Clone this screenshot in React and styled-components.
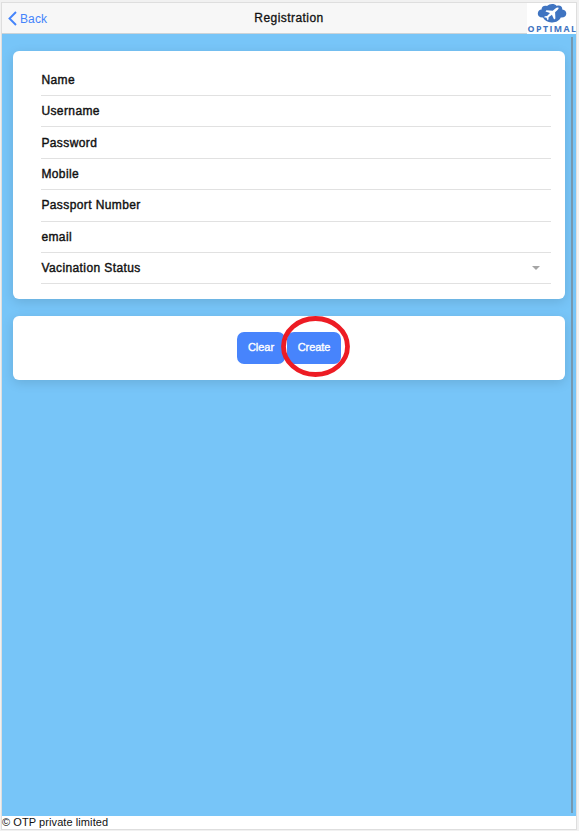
import React from 'react';
import styled, { createGlobalStyle } from 'styled-components';

const GlobalStyle = createGlobalStyle`
  * { box-sizing: border-box; }
  body {
    margin: 0;
    background: #f1f1f1;
    font-family: "Liberation Sans", Arial, sans-serif;
    color: #111;
  }
`;

const Page = styled.div`
  width: 579px;
  height: 831px;
  padding: 2px 2px 1px 1px;
  overflow: hidden;
`;

const Frame = styled.main`
  position: relative;
  height: 828px;
  width: 576px;
  border: 1px solid #dedede;
  background: #fff;
  display: flex;
  flex-direction: column;
`;

const Header = styled.header`
  display: grid;
  grid-template-columns: 1fr auto 1fr;
  align-items: center;
  height: 31px;
  flex: none;
  background: #f7f7f7;
  border-bottom: 1px solid #cbd3d8;
`;

const BackButton = styled.button`
  display: flex;
  align-items: center;
  gap: 3px;
  border: 0;
  padding: 0 0 0 6px;
  background: none;
  color: #4484fb;
  font: 12px "Liberation Sans", Arial, sans-serif;
  letter-spacing: 0.1px;
`;

const Title = styled.h1`
  margin: 0 0 2px 0;
  font-size: 12px;
  font-weight: 400;
  letter-spacing: 0.44px;
  -webkit-text-stroke: 0.3px #111;
`;

const Brand = styled.div`
  justify-self: end;
  align-self: start;
  display: flex;
  flex-direction: column;
  align-items: center;
  width: 49px;
  height: 31px;
  background: #fff;
  color: #3f74c1;
`;

const BrandName = styled.span`
  font: 700 8.8px/8px "Open Sans", sans-serif;
  letter-spacing: 1.45px;
  margin: 2px -2px 0 0;
`;

const Content = styled.section`
  position: relative;
  flex: 1;
  display: flex;
  flex-direction: column;
  gap: 17px;
  padding: 17px 11px 0;
  background: #77c5f8;
`;

const Card = styled.div`
  width: 552px;
  flex: none;
  border-radius: 6px;
  background: #fff;
  box-shadow: 0 3px 12px rgba(0, 0, 0, 0.12);
`;

const FormCard = styled(Card)`
  height: 248px;
  padding: 13.6px 14px 0 28px;
`;

const ActionCard = styled(Card)`
  height: 64px;
  padding-top: 16px;
  display: flex;
  justify-content: center;
  gap: 2px;
`;

const Field = styled.label`
  display: flex;
  align-items: center;
  justify-content: space-between;
  height: 31.4px;
  padding: 0 11px 0 0.4px;
  border-bottom: 1px solid #e1e1e1;
  font-size: 12px;
  letter-spacing: 0.4px;
  -webkit-text-stroke: 0.4px #111;
`;

const Caret = styled.i`
  border: 4px solid transparent;
  border-top-color: #a5a5a5;
  border-bottom: 0;
`;

const ActionButton = styled.button`
  width: ${({ $width }) => $width}px;
  height: 32px;
  padding: 0 0 2px;
  border: 0;
  border-radius: 7px;
  background: #4784fc;
  color: #fff;
  font: 11px "Liberation Sans", Arial, sans-serif;
  letter-spacing: -0.05px;
  -webkit-text-stroke: 0.35px #fff;
`;

const Highlight = styled.svg`
  position: absolute;
  left: 279px;
  top: 281px;
`;

const ScrollThumb = styled.div`
  position: absolute;
  top: 3px;
  right: 3px;
  width: 2px;
  height: 776px;
  background: #7699b0;
`;

const Footer = styled.footer`
  height: 13px;
  flex: none;
  font-size: 11px;
  line-height: 13px;
  letter-spacing: 0.08px;
  white-space: nowrap;
`;

const fields = ['Name', 'Username', 'Password', 'Mobile', 'Passport Number', 'email', 'Vacination Status'];

function CloudPlane() {
  return (
    <svg width="30" height="20" viewBox="0 0 30 20">
      <path
        fill="currentColor"
        d="M6 14.6C2.4 14.8.6 12.8.8 10.3 1 8 2.600 6.600 4.600 6.500 4.300 3.500 7.300 1.900 10 3 12.500.4 17.500.2 19.800 2.900 22.800 1.800 25.500 3.600 25.300 6.500 27.800 6.700 29.300 8.400 29.300 10.400 29.300 13.200 27 14.900 23.800 14.500 22.500 17.600 18.800 19.600 15 19.400 11 19.600 7.500 17.800 6 14.600z"
      />
      <path
        fill="#fff"
        d="M21.300 4.600c.7.700.1 1.700-.8 2.500l-2.400 2.100.3 6.200-1.300 1-2.200-4.700-3.300 2.600-.1 2.200-1 .7-1-2.400-2.500-.6.800-1 2.200-.1 3-3-4.500-1.700.9-1.200 6.300.5 2.700-2.300c.9-.8 2.300-1.300 2.900-.8z"
      />
    </svg>
  );
}

export default function App() {
  return (
    <Page>
      <GlobalStyle />
      <Frame>
        <Header>
          <BackButton>
            <svg width="9" height="15" viewBox="0 0 9 15" fill="none">
              <path d="M8 1 1.5 7.5 8 14" stroke="currentColor" strokeWidth="1.9" />
            </svg>
            Back
          </BackButton>
          <Title>Registration</Title>
          <Brand>
            <CloudPlane />
            <BrandName>OPTIMAL</BrandName>
          </Brand>
        </Header>
        <Content>
          <FormCard>
            {fields.map((name) => (
              <Field key={name}>
                {name}
                {name === 'Vacination Status' && <Caret />}
              </Field>
            ))}
          </FormCard>
          <ActionCard>
            <ActionButton $width={48}>Clear</ActionButton>
            <ActionButton $width={54}>Create</ActionButton>
          </ActionCard>
          <Highlight width="70" height="62" viewBox="0 0 70 62" fill="none">
            <ellipse cx="34.5" cy="31.5" rx="32" ry="28" stroke="#ed1c24" strokeWidth="4.8" />
          </Highlight>
          <ScrollThumb />
        </Content>
        <Footer>© OTP private limited</Footer>
      </Frame>
    </Page>
  );
}
